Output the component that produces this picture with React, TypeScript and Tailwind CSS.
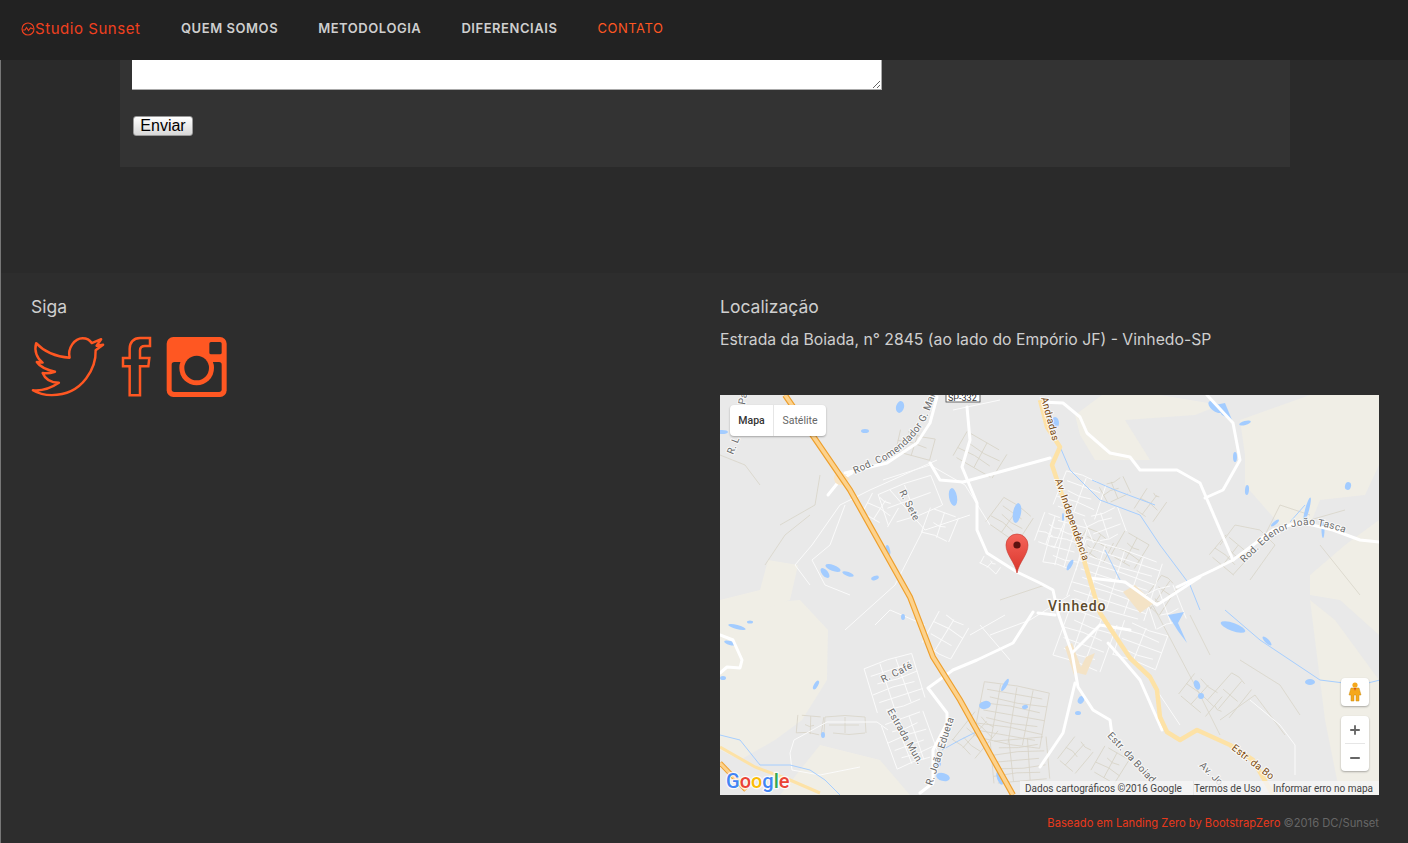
import { Minus, Plus } from "lucide-react";

const links = ["QUEM SOMOS", "METODOLOGIA", "DIFERENCIAIS"];
const sans = "font-['Inter','Noto_Sans',sans-serif]";

type Block = [number, number, number, number, number, number];

// cx, cy, w, h, angle, lines per side
const whiteBlocks: Block[] = [
  [175, 288, 50, 46, -18, 5], [190, 345, 44, 46, -20, 5], [225, 240, 34, 36, 30, 3],
  [360, 100, 42, 36, 20, 4], [345, 150, 34, 44, 15, 5], [385, 130, 36, 26, -20, 3],
  [395, 185, 80, 60, 18, 8], [365, 245, 50, 50, 20, 5], [420, 250, 46, 36, 20, 4],
  [445, 212, 30, 36, -20, 3], [330, 135, 22, 30, 20, 3], [160, 115, 30, 22, 30, 2],
  [190, 105, 56, 32, -20, 2], [220, 130, 30, 26, 20, 2], [270, 170, 20, 8, 35, 1],
];

const tanBlocks: Block[] = [
  [292, 320, 66, 56, 10, 8], [300, 365, 56, 42, -5, 6], [255, 340, 30, 36, 40, 4],
  [375, 150, 30, 22, 30, 3], [410, 155, 28, 28, 30, 3], [395, 95, 26, 18, -25, 2],
  [440, 200, 20, 34, 35, 3], [260, 60, 46, 28, 30, 3], [195, 50, 36, 22, 15, 2],
  [290, 125, 36, 30, 35, 4], [510, 160, 32, 26, 40, 3], [430, 110, 24, 24, 35, 2],
  [125, 330, 40, 16, 0, 2], [90, 330, 26, 18, 5, 2], [480, 300, 36, 26, 40, 2],
  [510, 300, 26, 36, 40, 2], [390, 370, 28, 28, 30, 3], [355, 360, 24, 28, 40, 2],
];

const thinWhite = [
  "M217 65 L150 95 L120 110 L92 150 L75 170 L90 190",
  "M163 85 L210 70 L245 90 L270 130",
  "M170 95 L205 135 L250 120",
  "M203 135 L175 190 L125 235",
  "M70 358 L74 345 L107 327 L157 327 L168 335",
  "M70 358 L72 375 L100 380 L140 372",
  "M125 110 L110 150 L92 165 L105 190 L130 200",
  "M233 15 L280 5",
  "M155 230 L170 215 L205 230",
  "M260 230 L290 265",
  "M250 240 L285 220",
  "M350 200 L310 225 L270 240",
  "M420 270 L460 330",
  "M530 305 L560 330 L575 350 L575 380",
];

const blueLines = [
  "M325 12 L335 40 L350 75 L380 105 L420 120 L440 150 L455 170 L470 190 L480 215",
  "M372 85 L395 95 L435 110",
  "M505 215 L540 245 L570 265 L600 285 L640 290 L660 285",
  "M0 340 L20 345 L40 370 L70 370 L90 375 L105 385 L120 400",
  "M222 355 L240 345 L260 335",
  "M385 155 L400 185",
  "M570 127 L585 110",
];

const water: [number, number, number, number, number][] = [
  [297, 118, 4, 10, 10], [233, 102, 4, 9, -10], [180, 12, 4, 6, 15], [168, 155, 2, 5, -15],
  [113, 173, 8, 3, 20], [105, 178, 3, 6, -40], [128, 179, 6, 2, 20], [155, 183, 4, 2, -20],
  [145, 36, 4, 2, 0], [2, 37, 6, 2, 0], [335, 28, 4, 6, 0], [495, 12, 8, 4, 40], [525, 28, 6, 2, -15],
  [515, 62, 2, 5, 0], [628, 91, 3, 4, 15], [527, 95, 2, 5, 5], [555, 128, 5, 1.5, -40], [587, 115, 2, 13, 15],
  [603, 135, 1.5, 8, 0], [513, 232, 13, 4, 20], [547, 246, 6, 2, 45], [590, 287, 5, 3, 0],
  [477, 290, 3, 5, -20], [481, 301, 3, 3, 0], [17, 232, 9, 2, 15], [10, 248, 6, 2, 15], [30, 227, 3, 1.5, 0],
  [96, 290, 2, 5, 30], [183, 222, 2, 3, 0], [265, 310, 6, 4, -15], [285, 290, 2, 7, 30], [305, 312, 3, 2, -15],
  [218, 368, 3, 4, 0], [223, 382, 7, 4, 15], [280, 383, 3, 7, -20], [103, 340, 2, 3, 0], [3, 283, 3, 2, 0],
  [358, 318, 3, 2, 0], [361, 305, 3, 4, 30], [350, 170, 2, 6, 30], [343, 122, 1, 4, 0],
];

function Streets({ blocks, stroke, width }: { blocks: Block[]; stroke: string; width: number }) {
  return (
    <g fill="none" stroke={stroke} strokeWidth={width}>
      {blocks.map(([cx, cy, w, h, a, n], i) => {
        const lines = [];
        for (let k = 0; k <= n; k++) {
          const y = -h / 2 + (h * k) / n;
          const x1 = -w / 2 + ((i + k) % 3) * 4;
          const x2 = w / 2 - ((i + k * 2) % 4) * 3;
          const bend = ((i + k) % 3) * 1.5 - 1.5;
          lines.push(<polyline key={`h${k}`} points={`${x1},${y} ${(x1 + x2) / 2},${y + bend} ${x2},${y}`} />);
        }
        const cols = Math.max(2, Math.round(n / 2));
        for (let k = 0; k <= cols; k++) {
          const x = -w / 2 + (w * k) / cols;
          lines.push(<line key={`v${k}`} x1={x} x2={x + ((i + k) % 3) - 1} y1={-h / 2} y2={h / 2} />);
        }
        return (
          <g key={i} transform={`translate(${cx} ${cy}) rotate(${a})`}>
            {lines}
          </g>
        );
      })}
    </g>
  );
}

function Label({ x, y, r, text, color = "#6b6b6b" }: { x: number; y: number; r: number; text: string; color?: string }) {
  return (
    <text
      x={x}
      y={y}
      transform={`rotate(${r} ${x} ${y})`}
      fontSize="10"
      letterSpacing="0.3"
      fill={color}
      stroke="#fff"
      strokeWidth="2"
      strokeOpacity="0.75"
      paintOrder="stroke"
      className="font-['Roboto',sans-serif]"
    >
      {text}
    </text>
  );
}

function CurvedLabel({ id, d, text }: { id: string; d: string; text: string }) {
  return (
    <>
      <path id={id} d={d} fill="none" />
      <text
        fontSize="10"
        letterSpacing="0.3"
        fill="#6b6b6b"
        stroke="#fff"
        strokeWidth="2"
        strokeOpacity="0.75"
        paintOrder="stroke"
        className="font-['Roboto',sans-serif]"
      >
        <textPath href={`#${id}`}>{text}</textPath>
      </text>
    </>
  );
}

function MapDrawing() {
  return (
    <svg viewBox="0 0 659 400" className="block h-[400px] w-[659px]">
      <rect width="659" height="400" fill="#e9e9e9" />
      <g fill="#f0eee6">
        <path d="M0 212 L80 205 L108 235 L107 285 L82 325 L55 345 L20 365 L0 355 Z" />
        <path d="M48 165 L78 170 L70 205 L40 215 L0 225 L0 205 L40 195 Z" />
        <path d="M382 0 L440 0 L500 10 L475 20 L405 25 L430 65 L375 65 L360 40 L355 20 Z" />
        <path d="M520 25 L590 0 L659 0 L659 70 L645 100 L600 105 L590 130 L560 130 L525 90 L525 60 Z" />
        <path d="M625 150 L659 125 L659 240 L620 205 L590 200 L590 180 Z" />
        <path d="M590 205 L615 225 L659 285 L659 400 L620 400 L605 325 Z" />
        <path d="M100 350 L160 365 L190 400 L60 400 Z" />
      </g>
      <Streets blocks={tanBlocks} stroke="#d8d4c8" width={0.8} />
      <g fill="none" stroke="#d8d4c8" strokeWidth="0.8">
        <path d="M325 190 L280 205 M500 150 L515 130 L540 135 L555 150 L530 185 M520 265 L560 290 L580 320 M500 325 L535 300 L565 340 M430 205 L480 300 L500 340 M470 220 L490 260 M60 130 L95 110 L100 80 M45 170 L65 140 L90 120 M0 60 L25 70 L40 90" />
        <path d="M590 125 L625 115 M540 150 L560 110 L590 120 M600 150 L640 200" />
      </g>
      <Streets blocks={whiteBlocks} stroke="#fbfbfb" width={0.9} />
      <g fill="none" stroke="#fbfbfb" strokeWidth="1">
        {thinWhite.map((d) => (
          <path key={d} d={d} />
        ))}
      </g>
      <g fill="none" stroke="#a6ceff" strokeWidth="1">
        {blueLines.map((d) => (
          <path key={d} d={d} />
        ))}
      </g>
      <g fill="#a3ccff">
        {water.map(([x, y, rx, ry, a], i) => (
          <ellipse key={i} cx={x} cy={y} rx={rx} ry={ry} transform={`rotate(${a} ${x} ${y})`} />
        ))}
        <path d="M448 220 L464 217 L458 228 L467 248 L458 236 Z" />
        <path d="M495 10 L505 8 L512 25 L502 20 Z" />
      </g>
      <g fill="#f4e3c6">
        <path d="M403 197 L415 190 L434 208 L420 218 Z" />
        <path d="M345 252 L352 248 L362 275 L354 280 Z" />
        <path d="M366 262 L375 258 L366 280 L358 278 Z" />
      </g>
      <g fill="none" stroke="#fff" strokeLinejoin="round" strokeLinecap="round">
        <g strokeWidth="3">
          <path d="M247 12 L250 45 L242 72 L257 108 L257 135 L267 158 L297 177 L320 188 L333 195 L338 218 L352 258 L358 292 L373 315 L390 325 L392 340" />
          <path d="M125 78 L167 68 L197 48 L210 28 L217 2" />
          <path d="M210 68 L220 85 L243 87 L330 63" />
          <path d="M320 7 L343 8 L360 22 L367 38 L390 58 L410 62 L420 75 L457 75 L480 88 L513 165" />
          <path d="M487 0 L513 28 L520 65 L503 95 L485 103" />
          <path d="M457 192 L493 175 L513 165 L553 135 L580 127 L613 135 L640 145 L659 147" />
          <path d="M313 217 L293 248 L257 265 L233 275 L208 293 L227 318 L227 328 L213 355 L213 388 L200 398" />
          <path d="M0 240 L13 245 L22 265 L20 273 L7 272 L0 278" />
          <path d="M355 288 L343 338 L320 372" />
          <path d="M318 218 L335 220 M370 183 L405 187 L437 210 L480 182 M352 258 L380 230 L410 235 M388 248 L403 265 L420 285 L442 335" />
        </g>
        <path d="M108 100 L120 85 L132 78" strokeWidth="3" />
      </g>
      <path d="M120 76 A7 7 0 1 0 122 90 L130 84 Z" fill="#f8e4c4" />
      <path d="M65 0 L130 95 L190 202 L213 262 L240 305 L293 400" fill="none" stroke="#eea02e" strokeWidth="6" />
      <path d="M65 0 L130 95 L190 202 L213 262 L240 305 L293 400" fill="none" stroke="#fdd28c" strokeWidth="3.6" />
      <path
        d="M320 5 L327 32 L340 52 L332 70 L363 162 L375 202 L380 218 L410 263 L430 282 L437 295 L440 322 L447 337 L460 345 L477 335 L510 350 L533 365 L553 400"
        fill="none"
        stroke="#fde2a6"
        strokeWidth="4.5"
        strokeLinejoin="round"
      />
      <path d="M0 352 L35 372 L70 385 L100 398" fill="none" stroke="#fde2a6" strokeWidth="3" />
      <path d="M0 368 L26 395" fill="none" stroke="#eea02e" strokeWidth="5" />
      <path d="M0 368 L26 395" fill="none" stroke="#fdd28c" strokeWidth="3" />

      <rect x="226" y="-3" width="34" height="10" fill="#fff" stroke="#444" strokeWidth="0.8" />
      <text x="228" y="6" fontSize="9" fill="#333" className="font-['Roboto',sans-serif]">
        SP-332
      </text>
      <Label x={13} y={60} r={-68} text="R. L" />
      <Label x={25} y={10} r={-80} text="Pa" />
      <CurvedLabel id="rod-com" d="M135 79 L168 64 Q196 46 208 20 L220 -12" text="Rod. Comendador G. Mam" />
      <CurvedLabel id="rod-ede" d="M524 168 L545 148 Q565 130 590 130 Q610 132 628 139" text="Rod. Edenor João Tasca" />
      <Label x={179} y={97} r={63} text="R. Sete" />
      <Label x={321} y={3} r={75} text="Andradas" color="#7a4a10" />
      <Label x={335} y={85} r={71} text="Av. Independência" color="#7a4a10" />
      <Label x={163} y={288} r={-27} text="R. Café" />
      <Label x={167} y={316} r={60} text="Estrada Mun." />
      <Label x={212} y={391} r={-72} text="R. João Edueta" />
      <Label x={387} y={341} r={47} text="Estr. da Boiad" />
      <Label x={479} y={371} r={45} text="Av. Jo" />
      <Label x={511} y={354} r={38} text="Estr. da Bo" color="#7a4a10" />
      <text
        x={328}
        y={216}
        fontSize="14"
        fontWeight="500"
        letterSpacing="1"
        fill="#5c4a2c"
        stroke="#fff"
        strokeWidth="2.5"
        strokeOpacity="0.8"
        paintOrder="stroke"
        className="font-['Roboto',sans-serif]"
      >
        Vinhedo
      </text>
      <defs>
        <linearGradient id="pin" x1="0" x2="0" y1="0" y2="1">
          <stop offset="0" stopColor="#f5645a" />
          <stop offset="1" stopColor="#d9352b" />
        </linearGradient>
      </defs>
      <path
        d="M297 178 C295 167 286 160 286 150 A11 11 0 0 1 308 150 C308 160 299 167 297 178 Z"
        fill="url(#pin)"
        stroke="#c4362c"
        strokeWidth="0.6"
      />
      <circle cx="297" cy="150" r="3.6" fill="#5e1210" />
      <text
        x={6}
        y={393}
        fontSize="20"
        fontWeight="500"
        stroke="#fff"
        strokeWidth="2.5"
        strokeOpacity="0.8"
        paintOrder="stroke"
        className="font-['Roboto',sans-serif]"
      >
        <tspan fill="#4285f4">G</tspan>
        <tspan fill="#ea4335">o</tspan>
        <tspan fill="#fbbc05">o</tspan>
        <tspan fill="#4285f4">g</tspan>
        <tspan fill="#34a853">l</tspan>
        <tspan fill="#ea4335">e</tspan>
      </text>
    </svg>
  );
}

function MapPanel() {
  return (
    <div className="relative h-[400px] w-[659px] overflow-hidden">
      <MapDrawing />
      <div className="absolute left-[10px] top-[10px] flex h-[31px] items-center rounded-sm bg-white text-[10.5px] shadow-[0_1px_2px_rgba(0,0,0,0.3)] font-['Roboto',sans-serif]">
        <span className="flex h-full w-[44px] items-center justify-center border-r border-[#e6e6e6] font-medium text-[#333]">Mapa</span>
        <span className="flex h-full w-[52px] items-center justify-center text-[#666]">Satélite</span>
      </div>
      <div className="absolute left-[621px] top-[283px] flex h-[28px] w-[28px] items-center justify-center rounded-sm bg-white shadow-[0_1px_2px_rgba(0,0,0,0.3)]">
        <svg viewBox="0 0 14 20" className="h-[20px] w-[14px]">
          <circle cx="7" cy="3" r="2.6" fill="#f5a81c" />
          <path d="M3 6 H11 L13 13 H11 V19 H8 V13 H6 V19 H3 V13 H1 Z" fill="#f5a81c" stroke="#c98a0e" strokeWidth="0.5" />
          <path d="M6 6 L7 9 L8 6 Z" fill="#d8431f" />
        </svg>
      </div>
      <div className="absolute left-[621px] top-[321px] flex h-[55px] w-[28px] flex-col items-center rounded-sm bg-white shadow-[0_1px_2px_rgba(0,0,0,0.3)]">
        <span className="flex h-[27px] items-center text-[#666]">
          <Plus size={14} strokeWidth={3.2} />
        </span>
        <span className="h-px w-[20px] bg-[#e6e6e6]" />
        <span className="flex h-[27px] items-center text-[#666]">
          <Minus size={14} strokeWidth={3.2} />
        </span>
      </div>
      <div className="absolute bottom-0 right-0 flex h-[14px] w-[359px] items-center bg-[#f5f5f5]/80 pl-[5px] text-[10px] text-[#444] font-['Roboto',sans-serif]">
        <span className="w-[169px] border-r border-[#e6e6e6]">Dados cartográficos ©2016 Google</span>
        <span className="w-[79px]">Termos de Uso</span>
        <span>Informar erro no mapa</span>
      </div>
    </div>
  );
}

function Twitter() {
  return (
    <svg viewBox="0 0 240 210" className="ml-px mt-px h-[69px] w-[78px]">
      <path
        d="M22 30 C50 60 85 72 125 75 C118 45 140 15 165 15 C178 15 188 22 193 30 L222 18 L208 38 L228 35 L205 52 C207 100 170 190 70 190 C45 190 25 183 12 175 C40 178 65 170 92 152 C70 152 50 142 42 122 C55 124 68 122 80 118 C55 112 35 105 24 88 L42 90 C25 78 15 55 22 30 Z"
        fill="none"
        stroke="#ff5722"
        strokeWidth="7.5"
        strokeLinejoin="round"
      />
    </svg>
  );
}

function SocialGlyphs() {
  return (
    <svg viewBox="0 0 354 210" className="ml-[8px] h-[70px] w-[118px]">
      <path
        d="M105 18 L75 18 C55 18 44 32 44 50 L44 78 L24 78 L24 103 L44 103 L44 190 L75 190 L75 103 L100 103 L103 78 L75 78 L75 55 C75 45 80 42 90 42 L105 42 Z"
        fill="none"
        stroke="#ff5722"
        strokeWidth="7.5"
      />
      <rect x="155" y="15" width="180" height="180" rx="20" fill="#ff5722" />
      <rect x="170" y="90" width="150" height="90" rx="8" fill="#2d2d2d" />
      <circle cx="245" cy="108" r="52" fill="#ff5722" />
      <circle cx="245" cy="108" r="37" fill="#2d2d2d" />
      <rect x="283" y="30" width="37" height="37" rx="5" fill="#2d2d2d" />
    </svg>
  );
}

export default function App() {
  return (
    <div className={`h-[843px] w-[1408px] overflow-hidden bg-[#2d2d2d] ${sans}`}>
      <nav className="flex h-[60px] items-center bg-[#222222] pb-[2px]">
        <a className="ml-[21px] flex w-[120px] items-center whitespace-nowrap text-[15px] leading-[16px] tracking-[0.55px] text-[#f0401f]">
          <svg viewBox="0 0 14 14" className="h-[14px] w-[14px] shrink-0" fill="none" stroke="#f0401f" strokeWidth="1.1">
            <circle cx="7" cy="7" r="6" />
            <path d="M1.5 8 L4 8 L5.5 5.5 L7.5 8.5 L9.5 6 L12.5 7" />
          </svg>
          Studio Sunset
        </a>
        <ul className="ml-[40px] flex gap-[40px] text-[13px] font-semibold tracking-[0.55px]">
          {links.map((l) => (
            <li key={l} className="text-[#cfcfcf]">
              {l}
            </li>
          ))}
          <li className="font-normal text-[#ff5722]">CONTATO</li>
        </ul>
      </nav>
      <div className="h-[783px] border-l border-[#777]">
        <section className="h-[213px] bg-[#2a2a2a] pl-[119px]">
          <div className="h-[107px] w-[1170px] bg-[#333333] pl-[12px]">
            <textarea className="block h-[30px] w-[750px] rounded-none border-b border-r border-[#aaa] bg-white" />
            <button className="ml-px mt-[26px] h-[20px] w-[60px] rounded-[3px] border border-[#999] bg-gradient-to-b from-white to-[#d8d8d8] text-[16px] leading-none text-black font-['Liberation_Sans',sans-serif]">
              Enviar
            </button>
          </div>
        </section>
        <footer className="flex pt-[24px] text-[#cfcfcf]">
          <div className="w-[719px] pl-[30px]">
            <h4 className="text-[17.5px] leading-[20px]">Siga</h4>
            <div className="-ml-[3px] mt-[15px] flex">
              <Twitter />
              <SocialGlyphs />
            </div>
          </div>
          <div className="w-[659px]">
            <h4 className="text-[17.5px] leading-[20px]">Localização</h4>
            <p className="mt-[13px] text-[15.75px] leading-[20px]">Estrada da Boiada, n° 2845 (ao lado do Empório JF) - Vinhedo-SP</p>
            <div className="mt-[45px]">
              <MapPanel />
            </div>
            <p className="mt-[20px] text-right text-[11.2px] leading-[16px] text-[#666]">
              <span className="text-[#e8391c]">Baseado em Landing Zero by BootstrapZero</span> ©2016 DC/Sunset
            </p>
          </div>
        </footer>
      </div>
    </div>
  );
}
